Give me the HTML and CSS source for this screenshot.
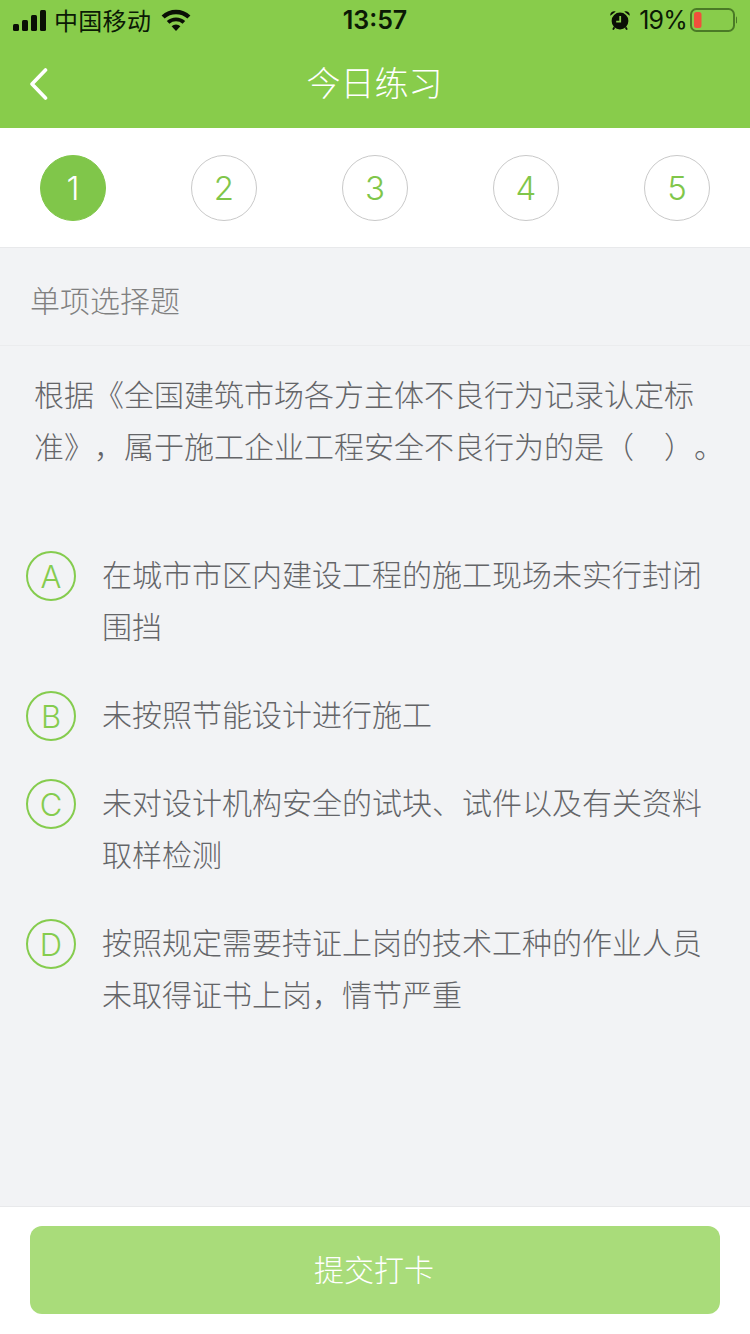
FILE: index.html
```html
<!DOCTYPE html>
<html lang="zh-CN">
<head>
    <meta charset="UTF-8">
    <meta name="viewport" content="width=device-width, initial-scale=1.0">
    <title>今日练习</title>
    <link rel="stylesheet" href="styles.css">
</head>
<body>
    <header class="top">
        <div class="status">
            <div class="status-left">
                <svg class="signal" width="33" height="21" viewBox="0 0 33 21">
                    <rect x="0" y="14" width="6" height="7" rx="1.5"/>
                    <rect x="9" y="10" width="6" height="11" rx="1.5"/>
                    <rect x="18" y="5" width="6" height="16" rx="1.5"/>
                    <rect x="27" y="0" width="6" height="21" rx="1.5"/>
                </svg>
                <span class="carrier">中国移动</span>
                <svg class="wifi" width="30" height="22" viewBox="0 0 30 22">
                    <path d="M15 22 10.6 17.2a6.6 6.6 0 0 1 8.8 0z"/>
                    <path d="M8.4 14.8 5.8 12a13.8 13.8 0 0 1 18.4 0l-2.6 2.8a10 10 0 0 0-13.2 0z"/>
                    <path d="M3.6 9.6 0.6 6.4a21 21 0 0 1 28.8 0l-3 3.2a16.8 16.8 0 0 0-22.8 0z"/>
                </svg>
            </div>
            <span class="time">13:57</span>
            <div class="status-right">
                <svg class="alarm" width="20" height="20" viewBox="0 0 20 20">
                    <circle cx="10" cy="11" r="8.4"/>
                    <path d="M0.4 5.8a3.8 3.8 0 0 1 5.4-4.2z"/>
                    <path d="M19.6 5.8a3.8 3.8 0 0 0-5.4-4.2z"/>
                    <path class="alarm-hand" d="M10.2 6v5.6H6.2"/>
                    <path class="alarm-leg" d="M4.4 17.2 3 19.6M15.6 17.2 17 19.6"/>
                </svg>
                <span class="percent">19%</span>
                <svg class="battery" width="47" height="24" viewBox="0 0 47 24">
                    <rect class="battery-body" x="1" y="1" width="43" height="22" rx="5.5"/>
                    <rect class="battery-level" x="4" y="4" width="7.5" height="16" rx="2.5"/>
                    <path class="battery-cap" d="M46 8.5a4 4 0 0 1 0 7z"/>
                </svg>
            </div>
        </div>
        <div class="nav">
            <svg class="back" width="19" height="32" viewBox="0 0 19 32">
                <path d="M16.5 2 3 16l13.5 14"/>
            </svg>
            <h1 class="title">今日练习</h1>
        </div>
    </header>

    <div class="steps">
        <div class="step active">1</div>
        <div class="step">2</div>
        <div class="step">3</div>
        <div class="step">4</div>
        <div class="step">5</div>
    </div>

    <div class="kind">单项选择题</div>

    <p class="question">根据《全国建筑市场各方主体不良行为记录认定标准》，属于施工企业工程安全不良行为的是（　）。</p>

    <div class="options">
        <div class="option">
            <span class="letter">A</span>
            <span class="option-text">在城市市区内建设工程的施工现场未实行封闭围挡</span>
        </div>
        <div class="option">
            <span class="letter">B</span>
            <span class="option-text">未按照节能设计进行施工</span>
        </div>
        <div class="option">
            <span class="letter">C</span>
            <span class="option-text">未对设计机构安全的试块、试件以及有关资料取样检测</span>
        </div>
        <div class="option">
            <span class="letter">D</span>
            <span class="option-text">按照规定需要持证上岗的技术工种的作业人员未取得证书上岗，情节严重</span>
        </div>
    </div>

    <footer class="bottom">
        <button class="submit" type="button">提交打卡</button>
    </footer>
</body>
</html>
```

FILE: styles.css
```css
* {
    box-sizing: border-box;
}

body {
    margin: 0;
    width: 750px;
    height: 1334px;
    overflow: hidden;
    display: flex;
    flex-direction: column;
    background-color: #f2f3f5;
    font-family: "Noto Sans CJK SC", "Liberation Sans", sans-serif;
    color: #646568;
    text-spacing-trim: space-all;
}

/* header */
.top {
    height: 128px;
    background-color: #88cc4b;
}

.status {
    height: 40px;
    padding: 0 13px;
    display: flex;
    align-items: center;
    justify-content: space-between;
    position: relative;
    color: #0b1a05;
}

.status-left,
.status-right {
    display: flex;
    align-items: center;
}

.status svg {
    display: block;
    fill: #0a0f05;
}

.carrier {
    margin-left: 8px;
    font-size: 24px;
    letter-spacing: 0.3px;
    line-height: 40px;
}

.wifi {
    margin-left: 10px;
}

.time {
    position: absolute;
    left: 0;
    right: 0;
    text-align: center;
    font-family: "Inter", "Liberation Sans", sans-serif;
    font-size: 25px;
    font-weight: 600;
    line-height: 42px;
}

.percent {
    margin-left: 9px;
    font-family: "Inter", "Liberation Sans", sans-serif;
    font-size: 25px;
    letter-spacing: -0.8px;
    line-height: 40px;
}

.battery {
    margin-left: 3px;
}

.status .battery-body {
    fill: none;
    stroke: #4a7a26;
    stroke-width: 2;
}

.status .battery-level {
    fill: #f0503c;
}

.status .battery-cap {
    fill: #4a7a26;
}

.status .alarm-hand,
.status .alarm-leg {
    fill: none;
    stroke-width: 1.8;
}

.alarm-hand {
    stroke: #88cc4b;
}

.alarm-leg {
    stroke: #0a0f05;
}

.nav {
    height: 88px;
    position: relative;
    display: flex;
    align-items: center;
    justify-content: center;
}

.back {
    position: absolute;
    left: 29px;
    top: 28px;
    fill: none;
    stroke: #fff;
    stroke-width: 3.6;
    stroke-linecap: round;
    stroke-linejoin: round;
}

.title {
    margin: 0 1px 4px 0;
    font-size: 34px;
    font-weight: 300;
    line-height: 84px;
    color: #fff;
}

/* step numbers */
.steps {
    height: 120px;
    padding: 27px 40px 0;
    display: flex;
    justify-content: space-between;
    background-color: #fff;
    border-bottom: 1px solid #e8e9eb;
}

.step {
    width: 66px;
    height: 66px;
    border: 1px solid #c9c9c9;
    border-radius: 50%;
    display: flex;
    align-items: center;
    justify-content: center;
    font-family: "Inter", "Liberation Sans", sans-serif;
    font-size: 33px;
    font-weight: 300;
    color: #80c64a;
}

.step.active {
    border-color: #80c64a;
    background-color: #80c64a;
    color: #fff;
}

/* question */
.kind {
    height: 98px;
    padding-left: 30px;
    border-bottom: 1px solid #ebecee;
    font-size: 30px;
    font-weight: 300;
    line-height: 102px;
    color: #808080;
}

.question {
    margin: 0;
    padding: 21px 26px 0 34px;
    font-size: 30px;
    font-weight: 300;
    line-height: 52px;
}

.options {
    margin-top: 77px;
    padding: 0 26px;
    display: flex;
    flex-direction: column;
    gap: 37px;
}

.option {
    display: flex;
    align-items: flex-start;
}

.letter {
    flex: none;
    width: 50px;
    height: 50px;
    margin: 3px 0 -2px;
    border: 2px solid #85cc4e;
    border-radius: 50%;
    display: flex;
    align-items: center;
    justify-content: center;
    font-family: "Inter", "Liberation Sans", sans-serif;
    font-size: 31px;
    font-weight: 300;
    color: #85cc4e;
}

.option-text {
    margin: -1px 0 0 26px;
    font-size: 30px;
    font-weight: 300;
    line-height: 52px;
}

/* submit */
.bottom {
    height: 128px;
    margin-top: auto;
    padding: 19px 30px 0;
    background-color: #fff;
    border-top: 1px solid #e8e9eb;
}

.submit {
    display: block;
    width: 100%;
    height: 88px;
    padding: 0 2px 4px 0;
    border: 0;
    border-radius: 12px;
    background-color: #a9dc7a;
    font-family: inherit;
    font-size: 30px;
    font-weight: 300;
    color: #fff;
}
```
